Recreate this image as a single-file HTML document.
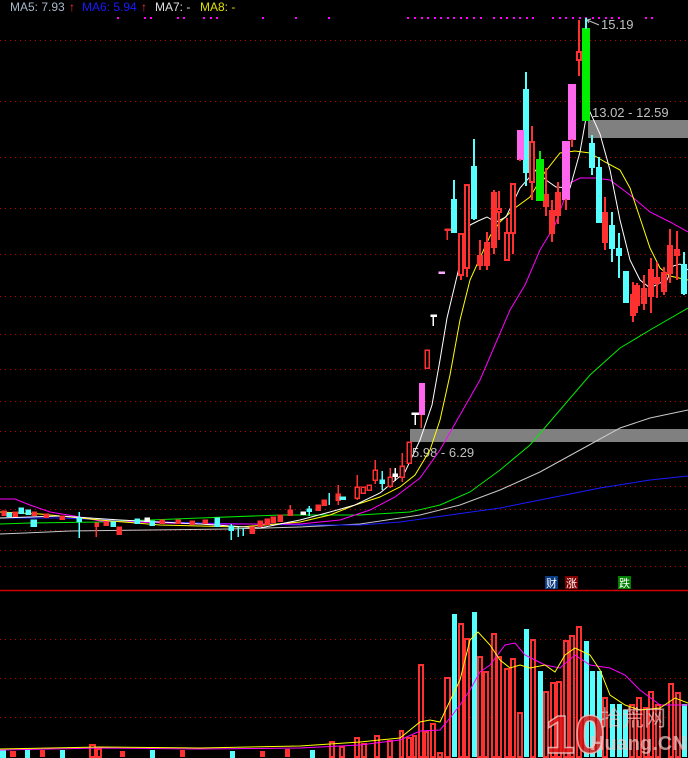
<!DOCTYPE html>
<html><head><meta charset="utf-8"><style>
html,body{margin:0;padding:0;background:#000;width:688px;height:758px;overflow:hidden}
svg{display:block}
text{font-family:"Liberation Sans","Noto Sans CJK SC",sans-serif}
</style></head><body>
<svg width="688" height="758" viewBox="0 0 688 758" xmlns="http://www.w3.org/2000/svg">
<rect width="688" height="758" fill="#000"/>
<g stroke="#c00000" stroke-width="1" stroke-dasharray="1,4" shape-rendering="crispEdges">
<line x1="0" y1="40.5" x2="688" y2="40.5"/><line x1="0" y1="101.5" x2="688" y2="101.5"/>
<line x1="0" y1="157.5" x2="688" y2="157.5"/><line x1="0" y1="208.5" x2="688" y2="208.5"/>
<line x1="0" y1="254.5" x2="688" y2="254.5"/><line x1="0" y1="296.5" x2="688" y2="296.5"/>
<line x1="0" y1="334.5" x2="688" y2="334.5"/><line x1="0" y1="369.5" x2="688" y2="369.5"/>
<line x1="0" y1="401.5" x2="688" y2="401.5"/><line x1="0" y1="431.5" x2="688" y2="431.5"/>
<line x1="0" y1="461.5" x2="688" y2="461.5"/><line x1="0" y1="486.5" x2="688" y2="486.5"/>
<line x1="0" y1="509.5" x2="688" y2="509.5"/><line x1="0" y1="530.5" x2="688" y2="530.5"/>
<line x1="0" y1="550.5" x2="688" y2="550.5"/><line x1="0" y1="566.5" x2="688" y2="566.5"/>
<line x1="0" y1="639.5" x2="688" y2="639.5"/><line x1="0" y1="678.5" x2="688" y2="678.5"/>
<line x1="0" y1="717.5" x2="688" y2="717.5"/>
</g>
<line x1="0" y1="590.5" x2="688" y2="590.5" stroke="#d00000" stroke-width="1.5"/>
<g fill="#ff00ff">
<rect x="117" y="17" width="2" height="2"/><rect x="144" y="17" width="2" height="2"/><rect x="150" y="17" width="2" height="2"/>
<rect x="177" y="17" width="2" height="2"/><rect x="183" y="17" width="2" height="2"/><rect x="203" y="17" width="2" height="2"/>
<rect x="210" y="17" width="2" height="2"/><rect x="216" y="17" width="2" height="2"/><rect x="262" y="17" width="2" height="2"/>
<rect x="295" y="17" width="2" height="2"/><rect x="328" y="17" width="2" height="2"/>
<rect x="407" y="17" width="2" height="2"/><rect x="414" y="17" width="2" height="2"/><rect x="421" y="17" width="2" height="2"/><rect x="427" y="17" width="2" height="2"/><rect x="434" y="17" width="2" height="2"/><rect x="440" y="17" width="2" height="2"/><rect x="447" y="17" width="2" height="2"/><rect x="453" y="17" width="2" height="2"/><rect x="460" y="17" width="2" height="2"/><rect x="466" y="17" width="2" height="2"/><rect x="473" y="17" width="2" height="2"/><rect x="480" y="17" width="2" height="2"/>
<rect x="493" y="17" width="2" height="2"/><rect x="500" y="17" width="2" height="2"/><rect x="506" y="17" width="2" height="2"/><rect x="513" y="17" width="2" height="2"/><rect x="519" y="17" width="2" height="2"/><rect x="526" y="17" width="2" height="2"/><rect x="532" y="17" width="2" height="2"/>
<rect x="552" y="17" width="2" height="2"/><rect x="559" y="17" width="2" height="2"/><rect x="565" y="17" width="2" height="2"/><rect x="572" y="17" width="2" height="2"/><rect x="579" y="17" width="2" height="2"/><rect x="585" y="17" width="2" height="2"/><rect x="592" y="17" width="2" height="2"/><rect x="598" y="17" width="2" height="2"/><rect x="605" y="17" width="2" height="2"/><rect x="611" y="17" width="2" height="2"/><rect x="618" y="17" width="2" height="2"/><rect x="645" y="17" width="2" height="2"/><rect x="651" y="17" width="2" height="2"/>
</g>
<text x="10" y="11" font-size="12" fill="#a8b8c8">MA5: 7.93</text>
<text x="69" y="11" font-size="12" fill="#ff3030">↑</text>
<text x="82" y="11" font-size="12" fill="#1a1aff">MA6: 5.94</text>
<text x="141" y="11" font-size="12" fill="#ff3030">↑</text>
<text x="155" y="11" font-size="12" fill="#e0e0e0">MA7: -</text>
<text x="200" y="11" font-size="12" fill="#e0e000">MA8: -</text>
<rect x="588" y="120" width="100" height="18" fill="#808080"/>
<rect x="410" y="429" width="278" height="13" fill="#808080"/>
<text x="592" y="117" font-size="13" fill="#c0c0c0">13.02 - 12.59</text>
<text x="412" y="457" font-size="13" fill="#c0c0c0">5.98 - 6.29</text>
<text x="601" y="29" font-size="13" fill="#c0c0c0">15.19</text>
<path d="M587 20 L599 25 M587 20 L591 19 M587 20 L589 23" stroke="#c0c0c0" fill="none"/>
<g fill="none" stroke-width="1">
<polyline stroke="#c8c8c8" points="0,534 25,533 70,531 150,530 230,529 300,527 360,524 420,515 460,505 500,490 540,472 580,450 620,428 650,418 688,410"/>
<polyline stroke="#1a1aff" points="0,518 60,518 130,521 200,523 300,525 360,525 400,522 450,515 500,508 550,498 600,488 650,480 688,476"/>
<polyline stroke="#00ee00" points="0,524 30,523 100,522 200,518 280,515 360,515 410,512 440,505 470,492 500,470 530,445 560,410 590,375 620,348 650,330 688,308"/>
<polyline stroke="#ff00ff" points="0,499 15,499 30,505 50,512 80,517 100,521 200,524 300,524 340,520 370,510 395,497 420,478 440,450 460,415 480,380 495,345 510,310 525,285 540,250 555,225 570,183 580,178 595,178 610,180 630,195 650,212 670,222 688,232"/>
<polyline stroke="#ffff00" points="0,512 40,514 100,520 160,525 240,527 300,522 330,515 355,505 380,497 400,487 415,475 430,450 440,420 450,375 460,320 470,280 480,258 490,236 500,222 515,208 530,197 545,172 560,153 575,151 590,153 605,162 620,170 630,188 640,218 650,248 660,268 670,276 688,280"/>
<polyline stroke="#ffffff" points="0,518 60,516 120,520 200,524 260,528 300,520 330,512 355,505 380,493 405,472 420,440 432,405 440,360 447,318 458,272 470,225 478,221 487,217 496,222 506,217 520,188 536,170 546,180 556,187 570,188 580,152 586,118 590,112 600,134 610,170 620,220 630,260 640,280 650,288 660,283 667,280 673,266 680,264 688,270"/>
</g>
<g stroke-width="1.5" shape-rendering="crispEdges">
<g fill="#ff3030" stroke="#ff3030">
<rect x="2" y="511" width="4" height="4"/><rect x="13" y="512" width="4" height="4"/><rect x="32" y="512" width="4" height="3"/><rect x="44" y="514" width="4" height="3"/>
<rect x="60" y="516" width="4" height="3"/><rect x="95" y="523" width="3" height="3"/><line x1="96" y1="523" x2="96" y2="537"/><rect x="104" y="522" width="4" height="3"/>
<rect x="117" y="527" width="4" height="7"/><rect x="160" y="520" width="4" height="3"/><rect x="176" y="520" width="4" height="3"/><rect x="190" y="521" width="4" height="3"/>
<rect x="203" y="520" width="4" height="3"/><rect x="250" y="527" width="4" height="6"/><rect x="258" y="521" width="4" height="5"/><rect x="265" y="519" width="4" height="5"/>
<rect x="271" y="517" width="4" height="5"/><rect x="278" y="515" width="4" height="6"/><rect x="288" y="510" width="4" height="5"/><line x1="290" y1="505" x2="290" y2="516"/>
<rect x="316" y="505" width="4" height="5"/><rect x="322" y="500" width="4" height="5"/><line x1="338" y1="485" x2="338" y2="505"/><rect x="336" y="494" width="4" height="6"/>
<line x1="357" y1="475" x2="357" y2="500"/><rect x="355" y="487" width="4" height="11" fill="#000"/><rect x="361" y="487" width="4" height="6" fill="#000"/><rect x="367" y="485" width="4" height="5" fill="#000"/>
<line x1="375" y1="460" x2="375" y2="484"/><rect x="373" y="470" width="4" height="10" fill="#000"/><line x1="390" y1="468" x2="390" y2="488"/><rect x="388" y="477" width="4" height="9" fill="#000"/>
<line x1="402" y1="453" x2="402" y2="482"/><rect x="400" y="466" width="4" height="11" fill="#000"/><rect x="407" y="442" width="4" height="21" fill="#000"/>
<line x1="421" y1="415" x2="421" y2="428"/><rect x="425" y="350" width="4" height="18" fill="#000"/><rect x="445" y="229" width="5" height="1"/><line x1="447" y1="229" x2="447" y2="240"/>
</g>
<g fill="#55ffff" stroke="#55ffff">
<rect x="7" y="513" width="4" height="3"/><rect x="19" y="508" width="4" height="5"/><rect x="26" y="510" width="4" height="4"/><line x1="79" y1="512" x2="79" y2="538"/><rect x="77" y="518" width="4" height="3"/>
<rect x="31" y="520" width="5" height="6"/><rect x="111" y="522" width="4" height="4"/><rect x="135" y="519" width="4" height="4"/><rect x="150" y="521" width="4" height="4"/>
<rect x="215" y="518" width="4" height="8"/><line x1="231" y1="524" x2="231" y2="540"/><rect x="229" y="526" width="4" height="4"/><line x1="238" y1="527" x2="238" y2="537"/>
<line x1="243" y1="528" x2="243" y2="536"/><line x1="309" y1="506" x2="309" y2="516"/><rect x="307" y="509" width="4" height="2"/><line x1="329" y1="493" x2="329" y2="505"/><rect x="340" y="497" width="5" height="2"/>
<line x1="382" y1="471" x2="382" y2="490"/><rect x="380" y="480" width="4" height="3"/>
</g>
<g fill="#ffffff" stroke="#ffffff">
<rect x="145" y="518" width="4" height="3"/><rect x="301" y="512" width="4" height="2"/><line x1="395" y1="468" x2="395" y2="481"/><rect x="393" y="474" width="4" height="2"/>
<line x1="415" y1="413" x2="415" y2="425"/><rect x="412" y="413" width="6" height="1"/><line x1="433" y1="315" x2="433" y2="326"/><rect x="431" y="315" width="5" height="1"/><rect x="439" y="272" width="5" height="1" fill="#ffaaff" stroke="#ffaaff"/>
</g>
<rect x="419" y="383" width="6" height="32" fill="#ff66ee" stroke="none"/>
</g>
<g stroke-width="1.6" shape-rendering="crispEdges">
<g stroke="#ff3030" fill="#000">
<rect x="459" y="234" width="4" height="41"/><line x1="461" y1="275" x2="461" y2="280"/>
<rect x="465" y="185" width="4" height="83"/><line x1="467" y1="268" x2="467" y2="277"/>
<rect x="478" y="256" width="4" height="9"/><line x1="480" y1="240" x2="480" y2="270"/>
<rect x="485" y="243" width="4" height="22"/><line x1="487" y1="232" x2="487" y2="270"/>
<rect x="492" y="193" width="4" height="54"/><line x1="494" y1="190" x2="494" y2="254"/>
<line x1="499" y1="191" x2="499" y2="240"/><rect x="497" y="209" width="4" height="3"/>
<rect x="505" y="233" width="4" height="27"/><line x1="507" y1="218" x2="507" y2="233"/>
<rect x="511" y="184" width="4" height="49"/><line x1="513" y1="233" x2="513" y2="254"/>
<rect x="530" y="142" width="4" height="40"/><line x1="532" y1="126" x2="532" y2="142"/><line x1="532" y1="182" x2="532" y2="200"/>
<rect x="544" y="195" width="4" height="11"/><line x1="546" y1="168" x2="546" y2="216"/>
<rect x="550" y="211" width="4" height="22"/><line x1="552" y1="200" x2="552" y2="242"/>
<rect x="556" y="193" width="4" height="22"/><line x1="558" y1="182" x2="558" y2="224"/>
<rect x="577" y="52" width="4" height="8"/><line x1="579" y1="20" x2="579" y2="52"/><line x1="579" y1="60" x2="579" y2="76"/>
<rect x="603" y="213" width="4" height="29"/><line x1="605" y1="197" x2="605" y2="250"/>
<rect x="631" y="295" width="4" height="20"/><line x1="633" y1="282" x2="633" y2="322"/>
<rect x="635" y="286" width="4" height="19"/><line x1="637" y1="283" x2="637" y2="313"/>
<rect x="642" y="289" width="4" height="14"/><line x1="644" y1="275" x2="644" y2="310"/>
<rect x="649" y="270" width="4" height="26"/><line x1="651" y1="258" x2="651" y2="313"/>
<rect x="655" y="278" width="4" height="5"/><line x1="657" y1="262" x2="657" y2="298"/>
<rect x="662" y="273" width="4" height="18"/><line x1="664" y1="267" x2="664" y2="295"/>
<rect x="668" y="246" width="4" height="27"/><line x1="670" y1="229" x2="670" y2="283"/>
<rect x="675" y="250" width="4" height="5"/><line x1="677" y1="231" x2="677" y2="280"/>
</g>
<g fill="#55ffff" stroke="#55ffff">
<line x1="454" y1="180" x2="454" y2="232"/><rect x="452" y="200" width="4" height="32"/>
<line x1="474" y1="139" x2="474" y2="220"/><rect x="472" y="167" width="4" height="51"/>
<line x1="526" y1="72" x2="526" y2="186"/><rect x="524" y="90" width="4" height="82"/>
<line x1="592" y1="135" x2="592" y2="175"/><rect x="590" y="144" width="4" height="23"/>
<line x1="599" y1="157" x2="599" y2="222"/><rect x="597" y="168" width="4" height="54"/>
<line x1="612" y1="212" x2="612" y2="262"/><rect x="610" y="226" width="4" height="22"/>
<line x1="619" y1="233" x2="619" y2="278"/><rect x="617" y="249" width="4" height="6"/>
<rect x="624" y="272" width="4" height="30"/>
<line x1="684" y1="252" x2="684" y2="295"/><rect x="682" y="265" width="4" height="28"/>
</g>
<g fill="#ff66ee" stroke="#ff66ee">
<rect x="518" y="131" width="5" height="28"/><line x1="520" y1="159" x2="520" y2="161" stroke="#ff3030"/>
<rect x="563" y="142" width="6" height="57"/><line x1="566" y1="199" x2="566" y2="210" stroke="#ff3030"/>
<rect x="569" y="85" width="6" height="54"/><line x1="572" y1="139" x2="572" y2="147" stroke="#ff3030"/>
</g>
<g fill="#00ee00" stroke="#00ee00">
<rect x="537" y="160" width="6" height="40"/><line x1="540" y1="151" x2="540" y2="160"/>
<rect x="583" y="29" width="6" height="91"/><line x1="586" y1="18" x2="586" y2="29" stroke="#55ffff"/>
</g>
</g>
<rect x="545" y="576" width="13" height="13" fill="#0a3a80"/><text x="546" y="587" font-size="11" fill="#fff">财</text>
<rect x="565" y="576" width="13" height="13" fill="#800000"/><text x="566" y="587" font-size="11" fill="#fff">涨</text>
<rect x="618" y="576" width="13" height="13" fill="#008000"/><text x="619" y="587" font-size="11" fill="#fff">跌</text>
<g stroke="#ff3030" stroke-width="1.8" fill="#000" shape-rendering="crispEdges">
<rect x="400" y="731" width="3" height="26"/><rect x="407" y="738" width="4" height="19"/><rect x="413" y="736" width="3" height="21"/>
<rect x="419" y="665" width="4" height="92"/><rect x="425" y="732" width="3" height="25"/><rect x="431" y="724" width="4" height="33"/>
<rect x="438" y="753" width="4" height="4"/><rect x="445" y="678" width="5" height="79"/><rect x="459" y="624" width="4" height="133"/>
<rect x="465" y="639" width="4" height="118"/><rect x="478" y="657" width="4" height="100"/><rect x="484" y="672" width="4" height="85"/>
<rect x="492" y="634" width="4" height="123"/><rect x="497" y="657" width="4" height="100"/><rect x="505" y="669" width="4" height="88"/>
<rect x="511" y="659" width="4" height="98"/><rect x="518" y="713" width="4" height="44"/><rect x="531" y="640" width="4" height="117"/>
<rect x="544" y="692" width="4" height="65"/><rect x="551" y="683" width="4" height="74"/><rect x="557" y="682" width="4" height="75"/>
<rect x="564" y="641" width="4" height="116"/><rect x="570" y="636" width="4" height="121"/><rect x="577" y="627" width="4" height="130"/>
<rect x="603" y="698" width="4" height="59"/><rect x="630" y="705" width="4" height="52"/><rect x="637" y="698" width="4" height="59"/>
<rect x="644" y="708" width="4" height="49"/><rect x="649" y="692" width="4" height="65"/><rect x="656" y="705" width="4" height="52"/>
<rect x="669" y="684" width="4" height="73"/><rect x="676" y="693" width="4" height="64"/>
<rect x="90" y="745" width="5" height="12"/><rect x="97" y="749" width="4" height="8"/><rect x="330" y="742" width="4" height="15"/>
<rect x="340" y="747" width="4" height="10"/><rect x="355" y="738" width="4" height="19"/><rect x="362" y="744" width="4" height="13"/>
<rect x="375" y="736" width="4" height="21"/><rect x="388" y="741" width="4" height="16"/>
</g>
<g fill="#55ffff">
<rect x="452" y="614" width="5" height="143"/><rect x="472" y="612" width="5" height="145"/><rect x="524" y="629" width="5" height="128"/>
<rect x="538" y="671" width="5" height="86"/><rect x="584" y="641" width="5" height="116"/><rect x="590" y="671" width="5" height="86"/>
<rect x="597" y="671" width="5" height="86"/><rect x="610" y="704" width="5" height="53"/><rect x="617" y="704" width="5" height="53"/>
<rect x="623" y="710" width="5" height="47"/><rect x="682" y="704" width="5" height="53"/>
<rect x="0" y="750" width="6" height="8"/><rect x="25" y="749" width="5" height="9"/><rect x="60" y="750" width="5" height="8"/><rect x="150" y="750" width="5" height="8"/><rect x="230" y="751" width="5" height="7"/><rect x="310" y="750" width="5" height="8"/>
</g>
<g fill="#ff3030"><rect x="10" y="751" width="6" height="6"/><rect x="40" y="750" width="5" height="7"/><rect x="120" y="751" width="5" height="6"/><rect x="180" y="750" width="5" height="7"/><rect x="260" y="751" width="5" height="6"/><rect x="285" y="749" width="5" height="8"/></g>
<polyline fill="none" stroke="#ff00ff" points="0,750 100,748 200,749 300,748 360,745 400,740 420,731 440,730 450,718 460,705 470,690 480,672 490,665 505,645 515,643 525,655 535,660 545,665 560,668 575,655 590,665 610,668 625,675 640,690 660,705 675,705 688,705"/>
<polyline fill="none" stroke="#ffff00" points="0,749 100,747 200,748 300,746 360,742 400,738 420,722 430,720 440,722 448,705 460,680 470,640 478,632 490,645 500,660 510,668 520,665 530,668 545,665 555,672 565,655 575,648 590,655 600,670 610,695 625,705 640,710 660,708 675,698 688,703"/>
<text x="545" y="753" font-size="54" font-weight="bold" fill="#e01818" stroke="#f0c0c0" stroke-width="1.5" opacity="0.85">10</text>
<text x="600" y="726" font-size="22" fill="#f0c8c8" opacity="0.7">拾荒网</text>
<text x="590" y="750" font-size="20" font-weight="bold" fill="#f0c8c8" opacity="0.7">Huang.CN</text>
</svg>
</body></html>
